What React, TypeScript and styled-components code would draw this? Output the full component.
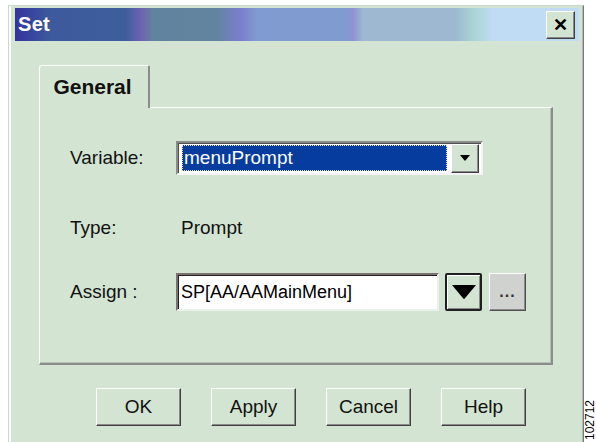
import React from 'react';
import styled, { createGlobalStyle } from 'styled-components';

const GlobalStyle = createGlobalStyle`
  html, body {
    margin: 0;
    padding: 0;
    background: #ffffff;
  }
  body {
    font-family: "Liberation Sans", Arial, sans-serif;
  }
`;

const green = '#d3e5d2';

const Page = styled.div`
  display: flex;
  align-items: flex-start;
  height: 442px;
  padding: 5px 0 0 8px;
  box-sizing: border-box;
  overflow: hidden;
`;

const Window = styled.div`
  flex: none;
  width: 576px;
  height: 470px;
  box-sizing: border-box;
  padding: 2px 4px 0 6px;
  background: ${green};
  border: 1px solid;
  border-color: #c6dcc6 #7a7a7a #7a7a7a #c6dcc6;
  box-shadow: inset 2px 0 0 #ffffff, inset -1px 0 0 #b0b8b0;
`;

const TitleBar = styled.div`
  display: flex;
  align-items: center;
  justify-content: space-between;
  height: 33px;
  padding: 0 4px 0 3px;
  background: linear-gradient(
    to right,
    #35339e 0px,
    #3d5b9c 36px,
    #3d5d9b 110px,
    #6d62b2 126px,
    #62839f 138px,
    #62849e 200px,
    #7a7ecc 225px,
    #7f9bd0 242px,
    #7f9bd0 330px,
    #8c94d2 338px,
    #9db8d0 348px,
    #9db8d0 440px,
    #a8d4d4 458px,
    #c0dcf4 478px,
    #c0dcf4 564px
  );
`;

const Title = styled.span`
  color: #ffffff;
  font-weight: bold;
  font-size: 20px;
  letter-spacing: 0.3px;
`;

const CloseButton = styled.div`
  display: flex;
  align-items: center;
  justify-content: center;
  width: 29px;
  height: 28px;
  box-sizing: border-box;
  background: ${green};
  border: 1px solid;
  border-color: #ffffff #404040 #404040 #ffffff;
  box-shadow: inset -1px -1px 0 #8a8a8a;
  color: #000;
  font-weight: bold;
  font-size: 18px;
  line-height: 1;
`;

const Body = styled.div`
  padding: 24px 26px 0 24px;
`;

const TabStrip = styled.div`
  display: flex;
`;

const Tab = styled.div`
  position: relative;
  z-index: 1;
  width: 111px;
  height: 43px;
  margin-bottom: -1px;
  box-sizing: border-box;
  display: flex;
  align-items: center;
  justify-content: center;
  padding-right: 3px;
  background: ${green};
  border-top: 1px solid #ffffff;
  border-left: 1px solid #ffffff;
  border-right: 2px solid #8c8c8c;
  border-top-left-radius: 3px;
  border-top-right-radius: 2px;
  font-weight: bold;
  font-size: 21px;
  color: #111;
`;

const Panel = styled.div`
  height: 258px;
  box-sizing: border-box;
  padding: 33px 0 0 30px;
  border-top: 1px solid #ffffff;
  border-left: 1px solid #ffffff;
  border-right: 2px solid #8c8c8c;
  border-bottom: 2px solid #8c8c8c;
  box-shadow: inset -1px -1px 0 #b4c4b4;
  display: flex;
  flex-direction: column;
`;

const Row = styled.div<{ $top: number; $height: number }>`
  display: flex;
  align-items: center;
  height: ${(p) => p.$height}px;
  margin-top: ${(p) => p.$top}px;
`;

const Label = styled.span`
  width: 106px;
  flex: none;
  font-size: 19px;
  color: #111;
`;

const Value = styled.span`
  padding-left: 5px;
  font-size: 19px;
  color: #111;
`;

const Combo = styled.div`
  display: flex;
  align-items: center;
  width: 307px;
  height: 34px;
  box-sizing: border-box;
  padding: 2px 2px 2px 4px;
  background: #ffffff;
  border: 2px solid;
  border-color: #8a8a8a #f4f4f4 #f4f4f4 #8a8a8a;
  box-shadow: inset 1px 1px 0 #505050;
`;

const Selection = styled.div`
  flex: 1;
  align-self: stretch;
  margin: 0 4px 0 0;
  display: flex;
  align-items: center;
  padding-left: 2px;
  background: #063c9e;
  outline: 1px dotted #e8e0a0;
  outline-offset: -1px;
  color: #ffffff;
  font-size: 19px;
`;

const SmallArrowButton = styled.div`
  flex: none;
  width: 28px;
  height: 29px;
  box-sizing: border-box;
  display: flex;
  align-items: center;
  justify-content: center;
  background: ${green};
  border: 1px solid;
  border-color: #ffffff #404040 #404040 #ffffff;
  box-shadow: inset -1px -1px 0 #8a8a8a;
`;

const TextField = styled.div`
  width: 263px;
  height: 38px;
  box-sizing: border-box;
  display: flex;
  align-items: center;
  padding-left: 3px;
  background: #ffffff;
  border: 2px solid;
  border-color: #7a7070 #e8f2e8 #e8f2e8 #7a7070;
  box-shadow: inset 1px 1px 0 #202020;
  font-size: 18px;
  color: #000;
`;

const PickButton = styled.div<{ $dark?: boolean }>`
  flex: none;
  width: 37px;
  height: 38px;
  margin-left: ${(p) => (p.$dark ? 6 : 7)}px;
  box-sizing: border-box;
  display: flex;
  align-items: center;
  justify-content: center;
  background: ${(p) => (p.$dark ? green : '#d0d2d0')};
  border: ${(p) => (p.$dark ? 2 : 1)}px solid;
  border-color: ${(p) =>
    p.$dark ? '#202020' : '#ffffff #505050 #505050 #ffffff'};
  border-radius: ${(p) => (p.$dark ? 2 : 0)}px;
  box-shadow: ${(p) =>
    p.$dark
      ? 'inset 1px 1px 0 #ffffff, inset -1px -1px 0 #8a8a8a'
      : 'inset -1px -1px 0 #8a8a8a'};
  color: #333;
  font-size: 16px;
  font-weight: bold;
  letter-spacing: 1px;
`;

const ButtonRow = styled.div`
  display: flex;
  gap: 30px;
  margin-top: 23px;
  padding-left: 57px;
`;

const Button = styled.div`
  width: 85px;
  height: 38px;
  box-sizing: border-box;
  display: flex;
  align-items: center;
  justify-content: center;
  background: ${green};
  border: 1px solid;
  border-color: #ffffff #404040 #404040 #ffffff;
  box-shadow: inset -1px -1px 0 #8a8a8a;
  font-size: 19px;
  color: #111;
`;

const Aside = styled.div`
  flex: none;
  width: 12px;
  height: 435px;
  display: flex;
  align-items: flex-end;
  justify-content: center;
`;

const FigureNumber = styled.span`
  writing-mode: vertical-rl;
  transform: rotate(180deg);
  font-size: 12px;
  color: #000;
`;

const Triangle = ({ size }: { size: number }) => (
  <svg width={size} height={size * 0.6} viewBox="0 0 10 6">
    <polygon points="0,0 10,0 5,6" fill="#000" />
  </svg>
);

export default function App() {
  return (
    <>
      <GlobalStyle />
      <Page>
        <Window>
          <TitleBar>
            <Title>Set</Title>
            <CloseButton>✕</CloseButton>
          </TitleBar>
          <Body>
            <TabStrip>
              <Tab>General</Tab>
            </TabStrip>
            <Panel>
              <Row $top={0} $height={34}>
                <Label>Variable:</Label>
                <Combo>
                  <Selection>menuPrompt</Selection>
                  <SmallArrowButton>
                    <Triangle size={10} />
                  </SmallArrowButton>
                </Combo>
              </Row>
              <Row $top={36} $height={34}>
                <Label>Type:</Label>
                <Value>Prompt</Value>
              </Row>
              <Row $top={28} $height={38}>
                <Label>Assign :</Label>
                <TextField>SP[AA/AAMainMenu]</TextField>
                <PickButton $dark>
                  <Triangle size={24} />
                </PickButton>
                <PickButton>...</PickButton>
              </Row>
            </Panel>
            <ButtonRow>
              <Button>OK</Button>
              <Button>Apply</Button>
              <Button>Cancel</Button>
              <Button>Help</Button>
            </ButtonRow>
          </Body>
        </Window>
        <Aside>
          <FigureNumber>102712</FigureNumber>
        </Aside>
      </Page>
    </>
  );
}
